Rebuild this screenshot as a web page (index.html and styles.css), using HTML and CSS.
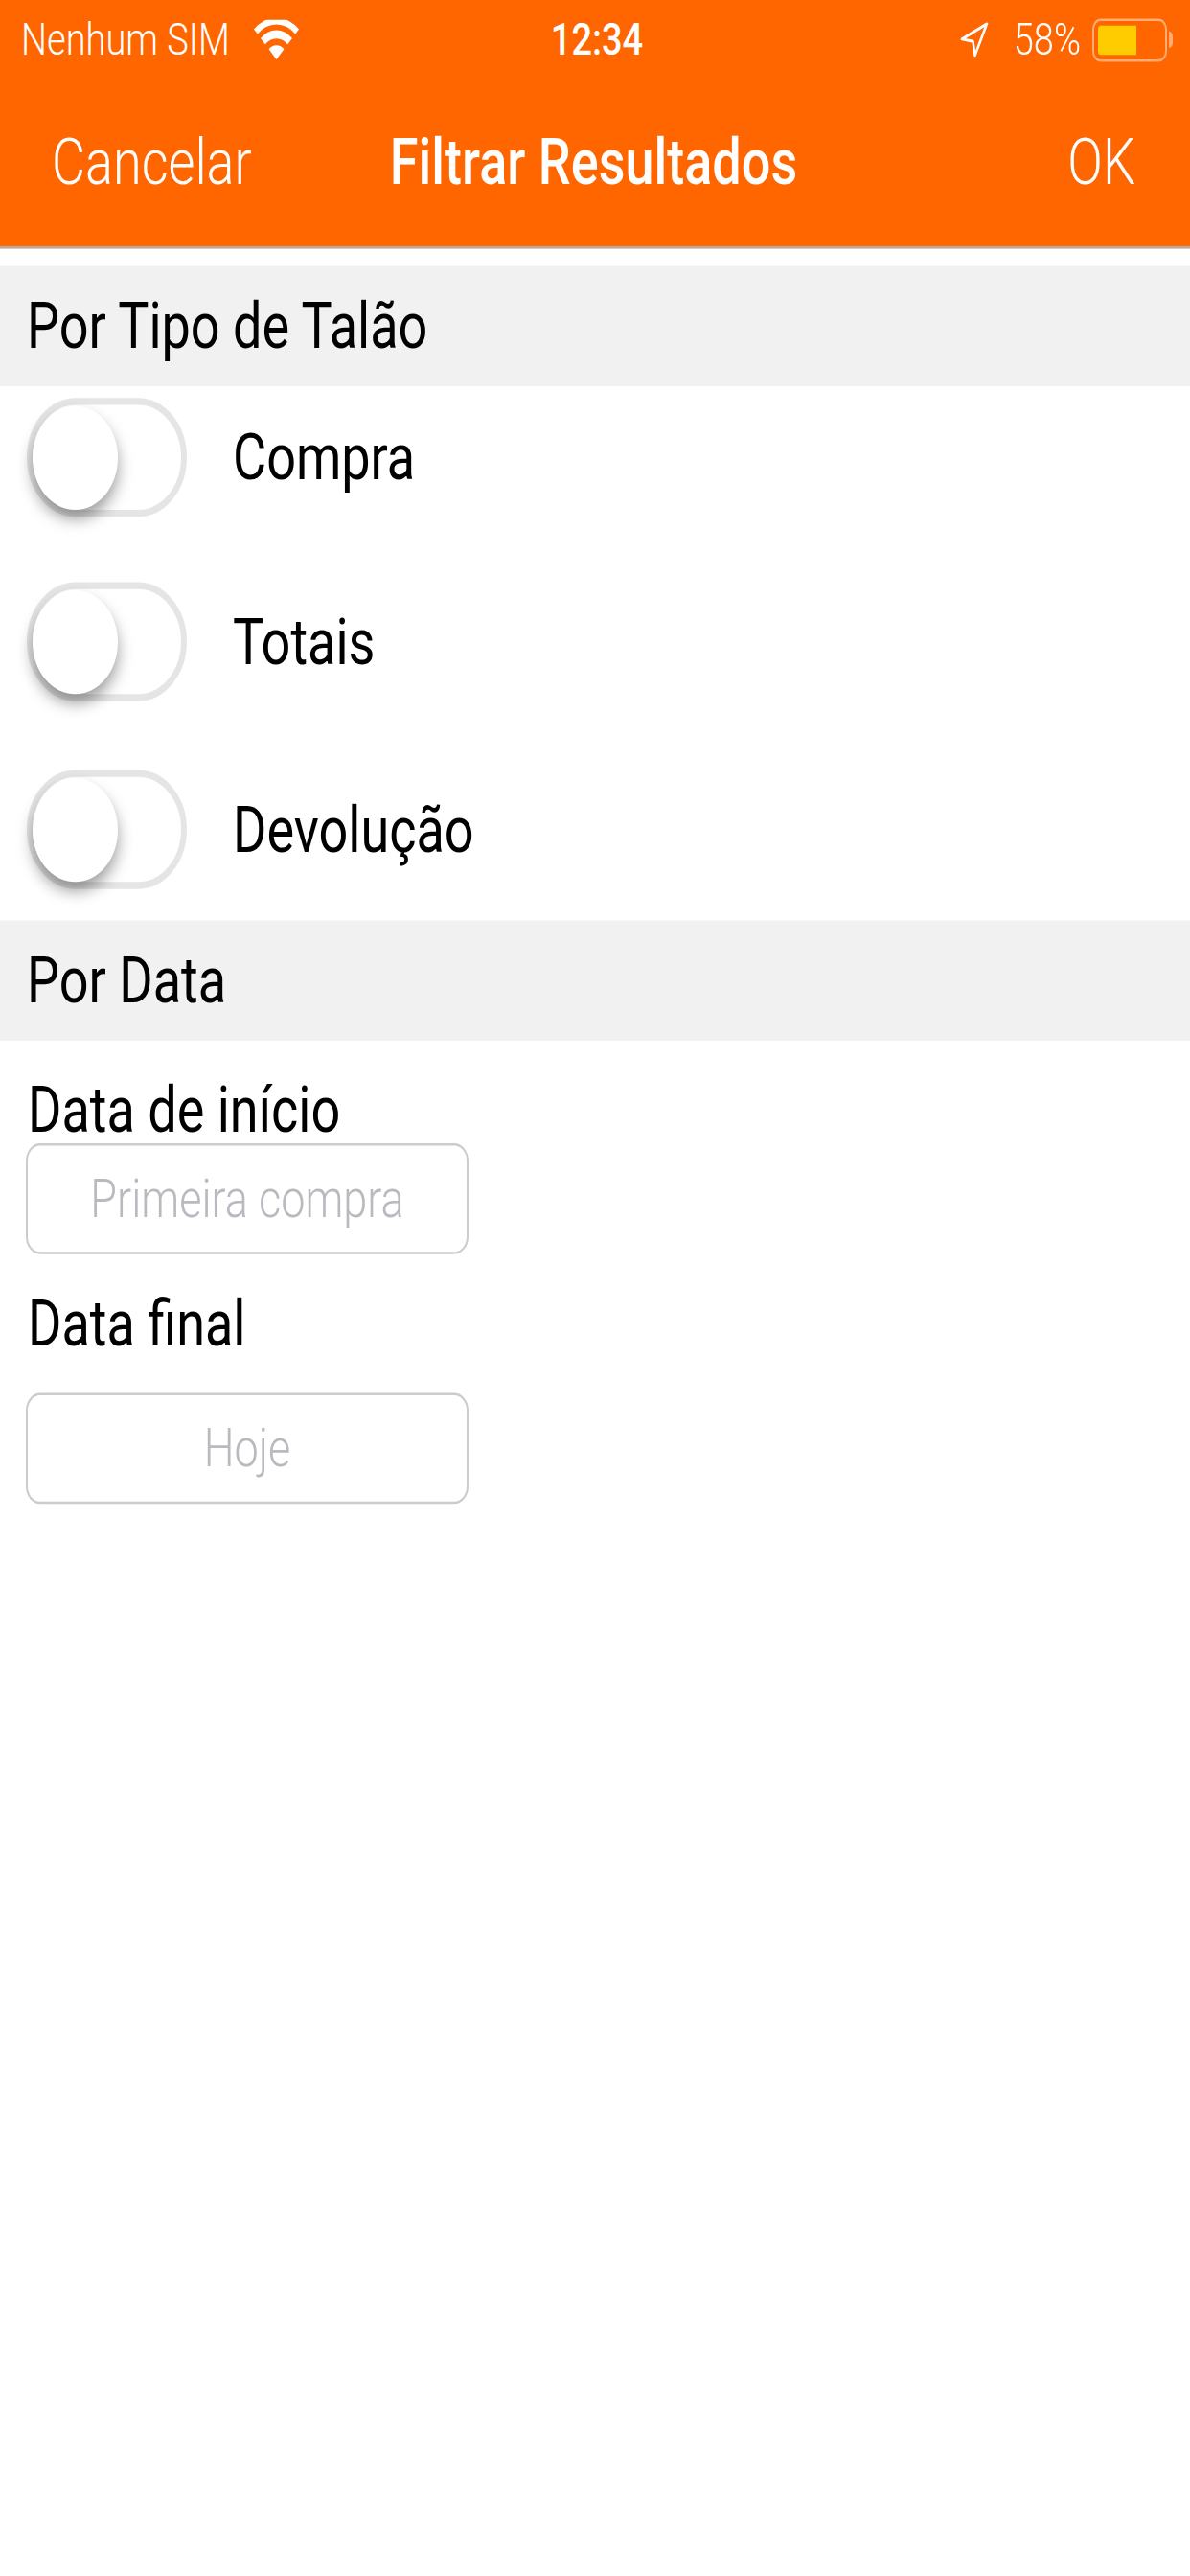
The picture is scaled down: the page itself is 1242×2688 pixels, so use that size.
FILE: index.html
```html
<!DOCTYPE html>
<html lang="pt">
<head>
	<meta charset="utf-8">
	<title>Filtrar Resultados</title>
	<link rel="stylesheet" href="styles.css">
</head>
<body>

<div class="screen">
	<header class="topbar">
		<div class="status">
			<div class="status-left">
				<span class="carrier">Nenhum SIM</span>
				<svg class="wifi" viewBox="0 0 47 34">
					<path d="M23.5 34 15.6 25.2a11 11 0 0 1 15.8 0Z"/>
					<path d="M11.8 21 7 15.9a23 23 0 0 1 33 0L35.2 21a16.2 16.2 0 0 0-23.4 0Z"/>
					<path d="M3.8 12.2 0 8.1a33 33 0 0 1 47 0l-3.8 4.1a27.6 27.6 0 0 0-39.4 0Z"/>
				</svg>
			</div>
			<span class="clock">12:34</span>
			<div class="status-right">
				<svg class="arrow" viewBox="0 0 30 30">
					<path d="M28 1.5 2 14.5 13.5 16.5 15.5 28.5Z"/>
				</svg>
				<span class="percent">58%</span>
				<div class="battery">
					<div class="battery-body"><div class="battery-fill"></div></div>
					<div class="battery-nub"></div>
				</div>
			</div>
		</div>
		<nav class="navbar">
			<span class="nav-btn nav-cancel">Cancelar</span>
			<span class="nav-title">Filtrar Resultados</span>
			<span class="nav-btn nav-ok">OK</span>
		</nav>
	</header>

	<h2 class="section first">Por Tipo de Talão</h2>

	<div class="toggles">
		<div class="row">
			<div class="switch"><div class="thumb"></div></div>
			<span class="row-label">Compra</span>
		</div>
		<div class="row">
			<div class="switch"><div class="thumb"></div></div>
			<span class="row-label">Totais</span>
		</div>
		<div class="row row-last">
			<div class="switch"><div class="thumb"></div></div>
			<span class="row-label">Devolução</span>
		</div>
	</div>

	<h2 class="section">Por Data</h2>

	<div class="dates">
		<div class="field-label">Data de início</div>
		<div class="field">Primeira compra</div>
		<div class="field-label second">Data final</div>
		<div class="field">Hoje</div>
	</div>
</div>

</body>
</html>
```

FILE: styles.css
```css
html, body {
	margin: 0;
	background: #fff;
}

/* the shot is a 1242x2208 screen stretched to 2688 tall */
.screen {
	width: 1242px;
	height: 2208px;
	overflow: hidden;
	transform: scaleY(1.2174);
	transform-origin: top left;
	font-family: Roboto, sans-serif;
	color: #000;
}

.topbar {
	background: #f60;
	color: #fff;
	border-bottom: 2px solid #b3aaa3;
}

.status {
	display: grid;
	grid-template-columns: 1fr auto 1fr;
	align-items: center;
	height: 68px;
	padding: 0 18px 0 22px;
	font-size: 38px;
	font-weight: 300;
}

.status-left {
	display: flex;
	align-items: center;
	gap: 25px;
}

.wifi {
	width: 47px;
	height: 34px;
	fill: #fff;
}

.clock {
	font-weight: 500;
}

.status-right {
	display: flex;
	align-items: center;
	justify-content: flex-end;
	gap: 12px;
}

.arrow {
	width: 30px;
	height: 30px;
	margin-right: 14px;
	fill: none;
	stroke: #fff;
	stroke-width: 2.5;
	stroke-linejoin: round;
}

.battery {
	display: flex;
	align-items: center;
}

.battery-body {
	box-sizing: border-box;
	width: 78px;
	height: 37px;
	padding: 4px;
	border: 2px solid rgba(255, 255, 255, .45);
	border-radius: 9px;
}

.battery-fill {
	width: 40px;
	height: 25px;
	background: #fc0;
	border-radius: 3px 0 0 3px;
}

.battery-nub {
	width: 4px;
	height: 14px;
	margin-left: 2px;
	background: rgba(255, 255, 255, .45);
	border-radius: 0 4px 4px 0;
}

.navbar {
	display: grid;
	grid-template-columns: 1fr auto 1fr;
	align-items: center;
	height: 143px;
	padding: 0 57px 0 54px;
	font-size: 54px;
}

.nav-btn {
	font-weight: 300;
}

.nav-ok {
	text-align: right;
}

.nav-title {
	font-weight: 500;
}

.section {
	margin: 0;
	padding-left: 28px;
	height: 103px;
	line-height: 103px;
	background: #f2f1f2;
	font-size: 54px;
	font-weight: 400;
}

.section.first {
	margin-top: 15px;
}

.toggles {
	display: flex;
	flex-direction: column;
	gap: 56px;
	padding: 10px 0 27px 28px;
}

.row {
	display: flex;
	align-items: center;
	gap: 48px;
}

.row-last {
	margin-top: 3px;
}

.row-label {
	font-size: 54px;
}

.switch {
	box-sizing: border-box;
	display: flex;
	align-items: center;
	width: 167px;
	height: 102px;
	border: 6px solid #e5e5e5;
	border-radius: 51px;
}

.thumb {
	flex: none;
	width: 89px;
	height: 89px;
	background: #fff;
	border-radius: 50%;
	box-shadow: 0 8px 14px rgba(0, 0, 0, .38);
}

.dates {
	padding: 31px 0 0 27px;
}

.field-label {
	height: 57px;
	padding-left: 2px;
	line-height: 57px;
	font-size: 54px;
}

.field-label.second {
	margin: 31px 0;
}

.field {
	box-sizing: border-box;
	width: 462px;
	height: 95px;
	line-height: 91px;
	border: 2px solid #ccc;
	border-radius: 15px;
	text-align: center;
	font-size: 45px;
	font-weight: 300;
	color: #b9b9bf;
}
```
